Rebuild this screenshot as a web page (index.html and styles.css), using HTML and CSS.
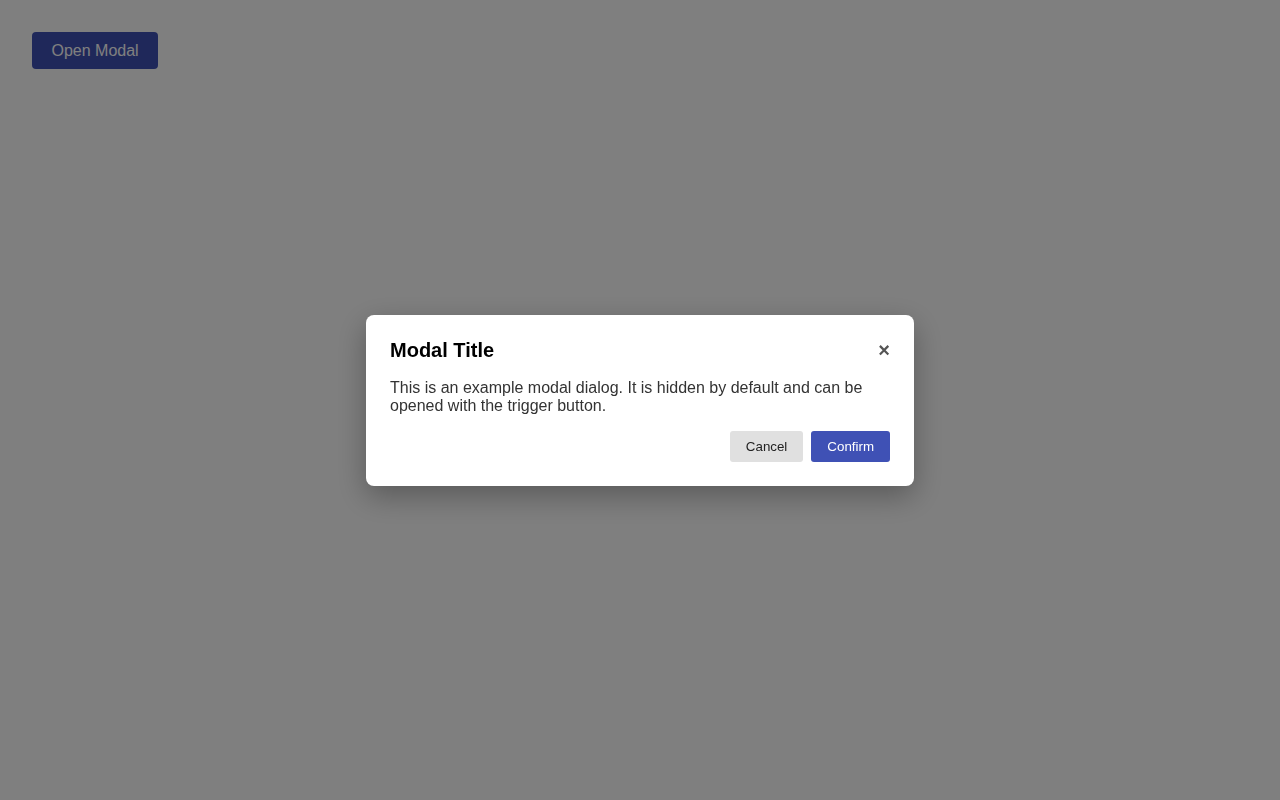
FILE: index.html
```html
<!DOCTYPE html>
<html lang="en">
<head>
<meta charset="utf-8">
<title>Modal</title>
<link rel="stylesheet" href="styles.css">
</head>
<body>
<button class="open-btn" type="button">Open Modal</button>
<div class="overlay">
  <div class="modal" role="dialog" aria-labelledby="modal-title">
    <div class="modal-header">
      <h2 class="modal-title" id="modal-title">Modal Title</h2>
      <button class="close-btn" type="button" aria-label="Close">&times;</button>
    </div>
    <p class="modal-body">This is an example modal dialog. It is hidden by default and can be opened with the trigger button.</p>
    <div class="modal-footer">
      <button class="btn btn-cancel" type="button">Cancel</button>
      <button class="btn btn-confirm" type="button">Confirm</button>
    </div>
  </div>
</div>
</body>
</html>
```
FILE: styles.css
```css
html, body {
  margin: 0;
  padding: 0;
  height: 100%;
}
body {
  background: #ffffff;
  font-family: "Liberation Sans", Arial, sans-serif;
  padding: 32px;
  box-sizing: border-box;
}
.open-btn {
  background: #3f51b5;
  color: #ffffff;
  border: none;
  border-radius: 4px;
  font-family: inherit;
  font-size: 16px;
  line-height: 19px;
  padding: 9px 19.5px;
  cursor: pointer;
}
.overlay {
  position: fixed;
  inset: 0;
  background: rgba(0, 0, 0, 0.5);
  display: flex;
  align-items: center;
  justify-content: center;
}
.modal {
  width: 500px;
  padding: 24px;
  background: #ffffff;
  border-radius: 8px;
  box-shadow: 0 10px 30px rgba(0, 0, 0, 0.3);
}
.modal-header {
  display: flex;
  align-items: center;
  justify-content: space-between;
  margin-bottom: 17px;
}
.modal-title {
  margin: 0;
  font-size: 20px;
  line-height: 23px;
  font-weight: bold;
  color: #000000;
}
.close-btn {
  background: none;
  border: none;
  padding: 0;
  font-family: inherit;
  font-size: 20px;
  line-height: 1;
  font-weight: bold;
  color: #555555;
  cursor: pointer;
}
.modal-body {
  margin: 0 0 15px;
  font-size: 16px;
  line-height: 18.5px;
  color: #333333;
}
.modal-footer {
  display: flex;
  justify-content: flex-end;
  gap: 8px;
}
.btn {
  border: none;
  border-radius: 3px;
  font-family: inherit;
  font-size: 13.333px;
  line-height: 15px;
  padding: 8px 16px;
  cursor: pointer;
}
.btn-cancel {
  background: #e0e0e0;
  color: #222222;
}
.btn-confirm {
  background: #3f51b5;
  color: #ffffff;
}
```
